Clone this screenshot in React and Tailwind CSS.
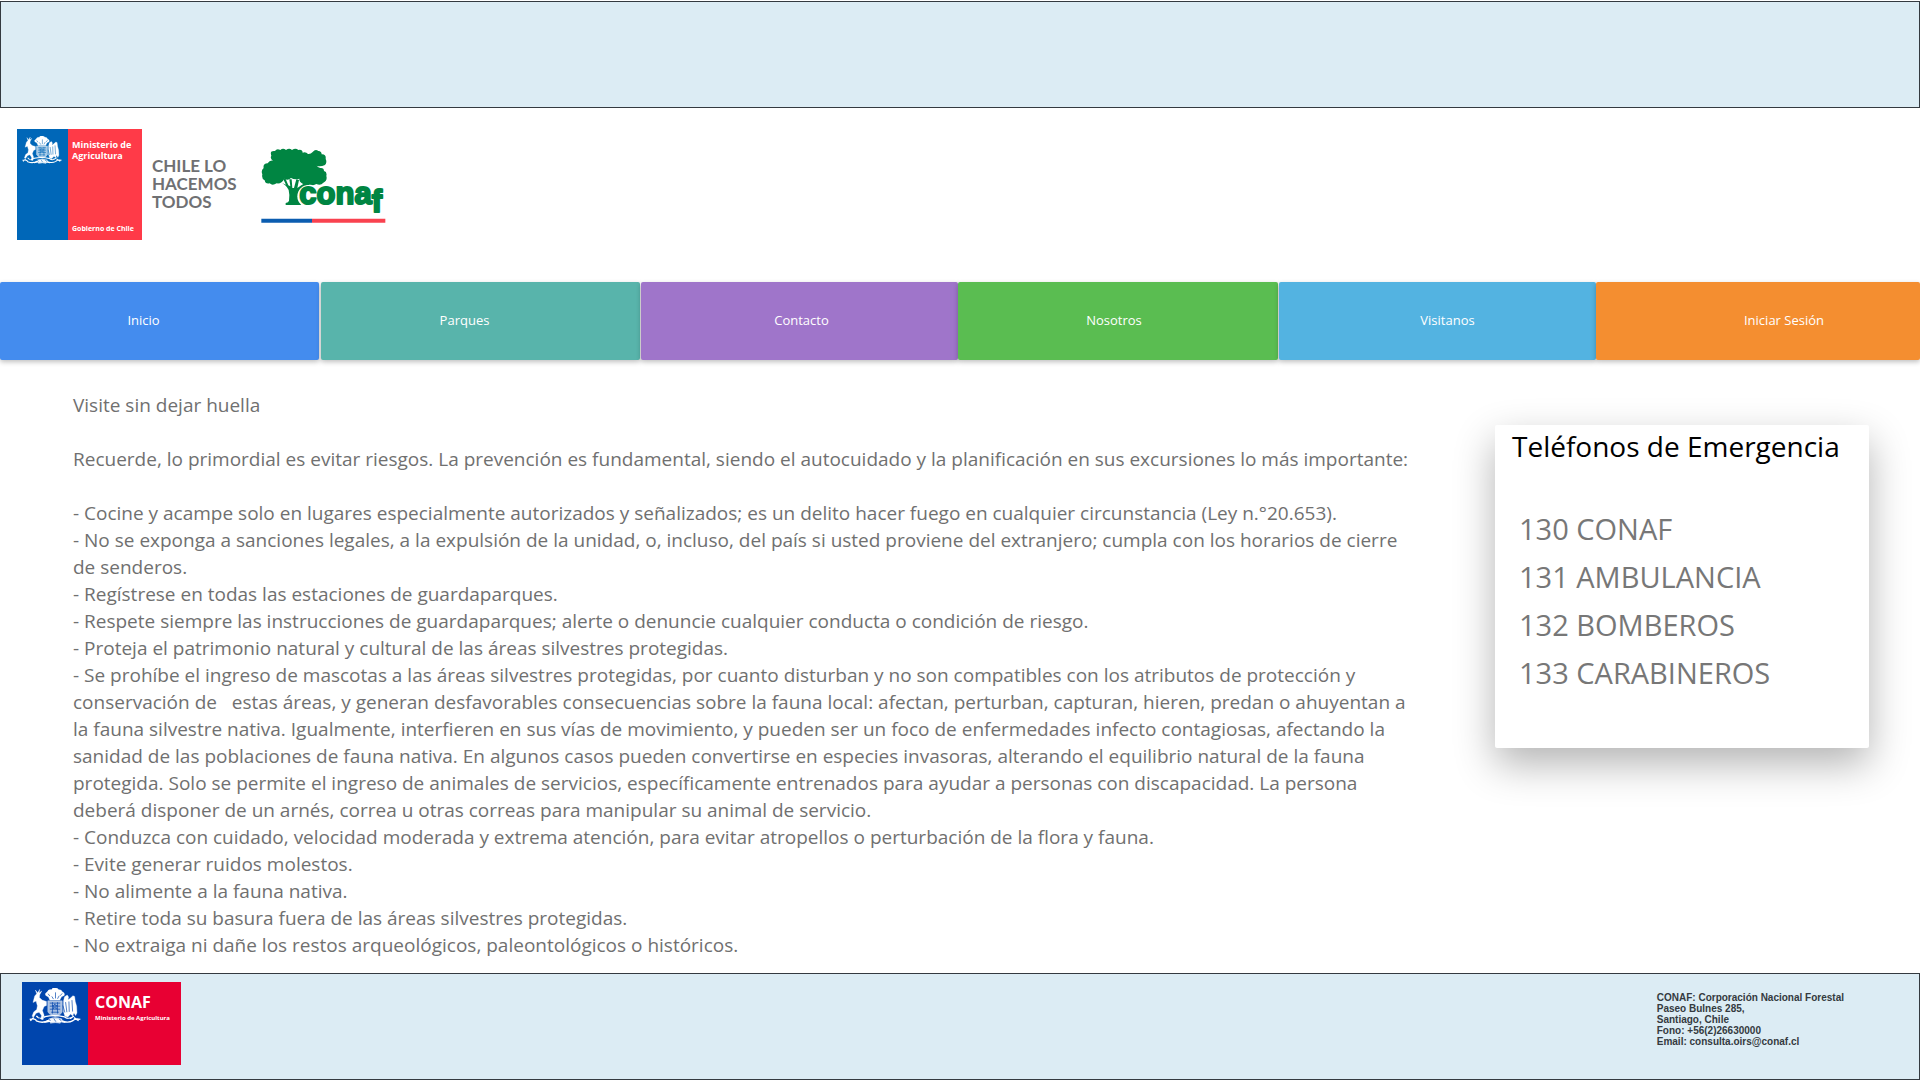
function CoatOfArms({ x, y, width, height, field }) {
  return (
    <svg x={x} y={y} width={width} height={height} viewBox="0 0 155 107" preserveAspectRatio="none">
      <g fill="#fff" stroke="#fff" strokeLinejoin="round">
        <path d="M54 12q-8 4-4 10l8 5 4 9h30l5-10 8-4q3-8-6-11-2-7-10-6-5-6-11-5-8-2-11 5-9-2-13 7z" />
        <path d="M17 24l6-7-4-11 7 8 6-10-2 11 8-6-6 11-1 8 8 8 13 4v12l-7 3-5 12 5 14-3 13-6-1 1-12-7-9-9 3-7 11-5-2 5-13 9-7 2-11-4-14-9 4z" />
        <path d="M103 38l3-12 8-5 4 6-2 8 6-4 9-8 5 2 2 15 4 14 1 20-4 8-5-8-4 9-6-6-8 9-9-2-4-13z" />
        <path d="M56 38h43v32q-3 11-21 15-18-4-22-15z" fillOpacity=".65" />
        <path fill="none" strokeWidth="4" d="M2 93q18-4 20 5 20 8 34-1 20-6 41 0 18 9 34 0 6-8 22-4M22 83q10 14 26 2 28-6 58 1 14 10 28-3M14 88l-10 9m130-9l14 9M46 102q30-7 62 0" />
        <path d="M58 92q20-8 41 0l-6 13q-14-4-29 0z" fillOpacity=".8" />
      </g>
      <g fill="none" stroke={field} strokeWidth="2">
        <path d="M62 45h31M62 54h31M62 63h31M66 72h23M70 42v34M85 42v34M77 47l2 5 5 0-4 4 2 6-5-4-5 4 2-6-4-4h5z" />
        <path d="M68 25l5 8m6-20v18m11-8l-5 9M57 17l5 7m37-8l-6 7M109 42l4 30m6-32l1 31m8-35l2 34m-29-18l6 21" />
        <path d="M30 88l6 8m8-8l5 10m8-8l7 8m10-7l6 9m9-9l8 7m8-7l5 7m9-8l6 7" />
      </g>
    </svg>
  );
}

function MinistryLogo() {
  return (
    <svg width="224" height="112" viewBox="0 0 224 112" role="img" aria-label="Ministerio de Agricultura, Gobierno de Chile" className="shrink-0">
      <path fill="#0067b8" d="M0 0h51v111H0z" />
      <path fill="#ff3a48" d="M51 0h74v111H51z" />
      <CoatOfArms x={5} y={7} width={40} height={28} field="#0067b8" />
      <g fill="#fff" className="font-['Open_Sans',sans-serif] font-bold">
        <text x="55" y="19" fontSize="9">Ministerio de</text>
        <text x="55" y="30" fontSize="9">Agricultura</text>
        <text x="55" y="102" fontSize="7">Gobierno de Chile</text>
      </g>
      <g fill="#6f7073" fontSize="17" className="font-['Lato',sans-serif] font-bold">
        <text x="135" y="43">CHILE LO</text>
        <text x="135" y="61">HACEMOS</text>
        <text x="135" y="79">TODOS</text>
      </g>
    </svg>
  );
}

function ConafLogo() {
  return (
    <svg width="126" height="78" viewBox="35 20 378 234" role="img" aria-label="CONAF" className="shrink-0">
      <g fill="#008542">
        <path d="M66 46Q60 30 77 32Q82 24 93 29Q101 22 110 29Q120 22 128 29Q139 22 147 29Q159 26 160 37Q170 34 176 41Q184 42 190 35Q198 25 207 32Q217 33 217 42Q231 41 229 56Q234 66 227 74Q213 80 202 76Q207 82 213 83Q224 82 224 92Q234 94 231 107Q235 121 222 127Q214 137 201 131Q191 138 180 131Q170 139 160 130Q149 124 150 115Q137 120 125 113Q116 122 105 115Q96 132 82 129Q69 137 61 129Q48 132 46 120Q36 116 39 102Q34 90 43 83Q40 70 55 69Q61 59 71 61Q61 54 66 46Z" />
        <path d="M90 124Q111 132 118 149Q122 166 119 181Q118 187 109 188V194H162V188Q151 187 149 179Q144 160 156 147Q168 134 190 132L177 123L157 134L144 143L149 119L141 117L134 143H129L127 117H120L123 138L117 135L108 114L102 117L110 133Z" />
      </g>
      <circle cx="178" cy="168" r="34" fill="#fff" />
      <text x="150" y="190" fontSize="93" fill="#008542" stroke="#008542" strokeWidth="6" strokeLinejoin="round" className="font-['Liberation_Sans',sans-serif] font-bold">
        cona<tspan dy="24">f</tspan>
      </text>
      <path fill="#0b5db0" d="M36 235h152v12H36z" />
      <path fill="#f9424f" d="M188 235h220v12H188z" />
    </svg>
  );
}

function FooterLogo() {
  return (
    <svg width="159" height="83" viewBox="0 0 159 83" role="img" aria-label="CONAF, Ministerio de Agricultura">
      <path fill="#0045ad" d="M0 0h66v83H0z" />
      <path fill="#e80033" d="M66 0h93v83H66z" />
      <CoatOfArms x={7} y={6} width={52} height={36} field="#0045ad" />
      <g fill="#fff" className="font-['Open_Sans',sans-serif] font-bold">
        <text x="73" y="26" fontSize="16">CONAF</text>
        <text x="73" y="38" fontSize="6">Ministerio de Agricultura</text>
      </g>
    </svg>
  );
}

const links = [
  { label: "Inicio", style: "bg-[#448cee] mr-0.5 pr-8" },
  { label: "Parques", style: "bg-[#58b4ab] mr-px pr-8" },
  { label: "Contacto", style: "bg-[#9f75ca] pl-1" },
  { label: "Nosotros", style: "bg-[#5abd51] mr-px pr-2" },
  { label: "Visitanos", style: "bg-[#53b3e1] pl-5" },
  { label: "Iniciar Sesión", style: "bg-[#f48e30] pl-13" },
];

const advice = `Visite sin dejar huella

Recuerde, lo primordial es evitar riesgos. La prevención es fundamental, siendo el autocuidado y la planificación en sus excursiones lo más importante:

- Cocine y acampe solo en lugares especialmente autorizados y señalizados; es un delito hacer fuego en cualquier circunstancia (Ley n.°20.653).
- No se exponga a sanciones legales, a la expulsión de la unidad, o, incluso, del país si usted proviene del extranjero; cumpla con los horarios de cierre
de senderos.
- Regístrese en todas las estaciones de guardaparques.
- Respete siempre las instrucciones de guardaparques; alerte o denuncie cualquier conducta o condición de riesgo.
- Proteja el patrimonio natural y cultural de las áreas silvestres protegidas.
- Se prohíbe el ingreso de mascotas a las áreas silvestres protegidas, por cuanto disturban y no son compatibles con los atributos de protección y
conservación de   estas áreas, y generan desfavorables consecuencias sobre la fauna local: afectan, perturban, capturan, hieren, predan o ahuyentan a
la fauna silvestre nativa. Igualmente, interfieren en sus vías de movimiento, y pueden ser un foco de enfermedades infecto contagiosas, afectando la
sanidad de las poblaciones de fauna nativa. En algunos casos pueden convertirse en especies invasoras, alterando el equilibrio natural de la fauna
protegida. Solo se permite el ingreso de animales de servicios, específicamente entrenados para ayudar a personas con discapacidad. La persona
deberá disponer de un arnés, correa u otras correas para manipular su animal de servicio.
- Conduzca con cuidado, velocidad moderada y extrema atención, para evitar atropellos o perturbación de la flora y fauna.
- Evite generar ruidos molestos.
- No alimente a la fauna nativa.
- Retire toda su basura fuera de las áreas silvestres protegidas.
- No extraiga ni dañe los restos arqueológicos, paleontológicos o históricos.`;

const phones = ["130 CONAF", "131 AMBULANCIA", "132 BOMBEROS", "133 CARABINEROS"];

export default function App() {
  return (
    <div className="flex min-h-screen flex-col bg-white pt-px font-['Open_Sans','Noto_Sans',sans-serif]">
      <div className="h-[107px] border border-[#343a40] bg-[#dcecf4]" />
      <header className="flex h-[174px] items-start gap-5 px-[17px] pt-[21px]">
        <MinistryLogo />
        <div className="pt-[18px]">
          <ConafLogo />
        </div>
      </header>
      <nav className="grid grid-cols-[321fr_320fr_317fr_321fr_317fr_324fr]">
        {links.map(({ label, style }) => (
          <a
            key={label}
            href="#"
            className={`flex h-[78px] items-center justify-center rounded-xs text-[13px] text-white shadow-[0_2px_5px_rgba(0,0,0,0.25)] ${style}`}
          >
            {label}
          </a>
        ))}
      </nav>
      <main className="flex flex-1 items-start justify-between pt-8 pr-[51px] pl-[73px]">
        <p className="whitespace-pre-wrap text-[19px] leading-[27px] text-[#707070]">{advice}</p>
        <section className="mt-[33px] min-h-[323px] w-[374px] shrink-0 rounded-xs bg-white shadow-[0_16px_40px_rgba(0,0,0,0.3)]">
          <h2 className="px-[17px] text-[28px] leading-[42px] text-black">Teléfonos de Emergencia</h2>
          <ul className="px-6 pt-[38px] text-[29px] leading-[48px] text-[#777]">
            {phones.map((phone) => (
              <li key={phone}>{phone}</li>
            ))}
          </ul>
        </section>
      </main>
      <footer className="flex h-[107px] items-start justify-between border border-[#343a40] bg-[#dcecf4] pt-2 pr-[75px] pl-[21px]">
        <FooterLogo />
        <address className="pt-2.5 font-['Liberation_Sans',sans-serif] text-[10px] leading-[11px] font-bold text-[#343a40] not-italic">
          CONAF: Corporación Nacional Forestal
          <br />
          Paseo Bulnes 285,
          <br />
          Santiago, Chile
          <br />
          Fono: +56(2)26630000
          <br />
          Email: consulta.oirs@conaf.cl
        </address>
      </footer>
    </div>
  );
}
